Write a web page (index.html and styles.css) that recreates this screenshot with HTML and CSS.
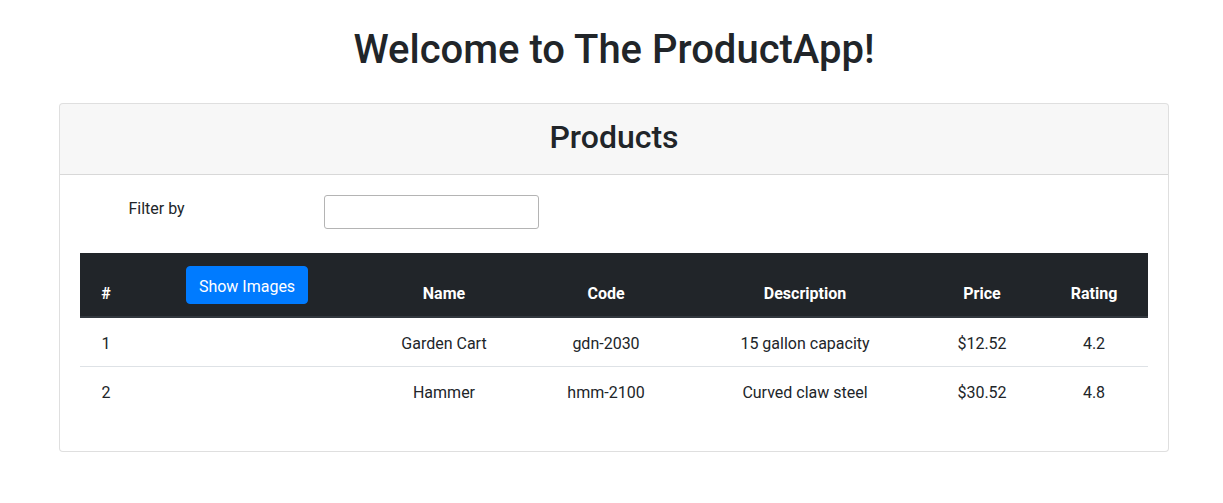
FILE: index.html
```html
<!DOCTYPE html>
<html lang="en">
<head>
<meta charset="utf-8">
<title>ProductApp</title>
<link rel="stylesheet" href="styles.css">
</head>
<body>
<div class="page">
  <div class="container">
    <h1 class="title">Welcome to The ProductApp!</h1>
    <div class="card">
      <div class="card-header">
        <h2 class="card-title">Products</h2>
      </div>
      <div class="card-body">
        <div class="filter-row">
          <div class="col-2 filter-label">Filter by</div>
          <div class="col-4 filter-input-wrap"><input class="filter-input" type="text"></div>
        </div>
        <table class="table">
          <colgroup>
            <col class="w-num"><col class="w-img"><col class="w-name"><col class="w-code"><col class="w-desc"><col class="w-price"><col class="w-rating">
          </colgroup>
          <thead>
            <tr>
              <th>#</th>
              <th><button class="btn" type="button">Show Images</button></th>
              <th>Name</th>
              <th>Code</th>
              <th>Description</th>
              <th>Price</th>
              <th>Rating</th>
            </tr>
          </thead>
          <tbody>
            <tr>
              <td>1</td><td></td><td>Garden Cart</td><td>gdn-2030</td><td>15 gallon capacity</td><td>$12.52</td><td>4.2</td>
            </tr>
            <tr>
              <td>2</td><td></td><td>Hammer</td><td>hmm-2100</td><td>Curved claw steel</td><td>$30.52</td><td>4.8</td>
            </tr>
          </tbody>
        </table>
      </div>
    </div>
  </div>
</div>
</body>
</html>
```

FILE: styles.css
```css
* { box-sizing: border-box; }
html, body { margin: 0; padding: 0; background: #fff; }
body {
  font-family: Roboto, "Liberation Sans", sans-serif;
  font-size: 16px;
  line-height: 1.5;
  color: #212529;
}
.page { padding-left: 5px; }
.container { width: 1110px; margin: 0 auto; }
.title {
  font-size: 40px;
  font-weight: 500;
  line-height: 1.2;
  text-align: center;
  margin: 26px 0 29px;
}
.card {
  border: 1px solid rgba(0,0,0,.125);
  border-radius: 4px;
  background: #fff;
}
.card-header {
  background: rgba(0,0,0,.03);
  border-bottom: 1px solid rgba(0,0,0,.125);
  padding: 12px 20px;
  border-radius: 3px 3px 0 0;
}
.card-title {
  font-size: 32px;
  font-weight: 500;
  line-height: 1.2;
  text-align: center;
  margin: 0 0 6px;
  padding-top: 2px;
}
.card-body { padding: 20px; }
.filter-row { display: flex; align-items: flex-start; margin: 0 -15px 24px; }
.col-2 { width: 183px; padding: 0 15px; }
.col-4 { width: 366px; padding: 0 15px; }
.filter-label { text-align: center; padding-top: 2px; }
.filter-input-wrap { display: flex; justify-content: center; }
.filter-input {
  width: 215px;
  height: 34px;
  border: 1px solid #b4b4b4;
  border-radius: 3px;
  font: inherit;
  padding: 4px 8px;
  background: #fff;
}
.table {
  width: 100%;
  border-collapse: collapse;
  table-layout: fixed;
  margin-bottom: 16px;
}
.w-num { width: 52px; }
.w-img { width: 230px; }
.w-name { width: 164px; }
.w-code { width: 160px; }
.w-desc { width: 238px; }
.w-price { width: 116px; }
.w-rating { width: 108px; }
.table th, .table td {
  padding: 14px 12px 10px;
  text-align: center;
}
.table thead th {
  background: #212529;
  color: #fff;
  font-weight: 700;
  vertical-align: bottom;
  padding: 12px 12px 10px;
  height: 64px;
  border-bottom: 2px solid #32383e;
}
.table tbody td {
  vertical-align: top;
  border-top: 1px solid #dee2e6;
}
.table tbody tr:first-child td { border-top: 0; }
.btn {
  font: inherit;
  font-weight: 400;
  line-height: 1.5;
  color: #fff;
  background: #007bff;
  border: 1px solid #007bff;
  border-radius: 4px;
  padding: 8px 12px 4px;
  margin-bottom: 2px;
  cursor: pointer;
}
```
